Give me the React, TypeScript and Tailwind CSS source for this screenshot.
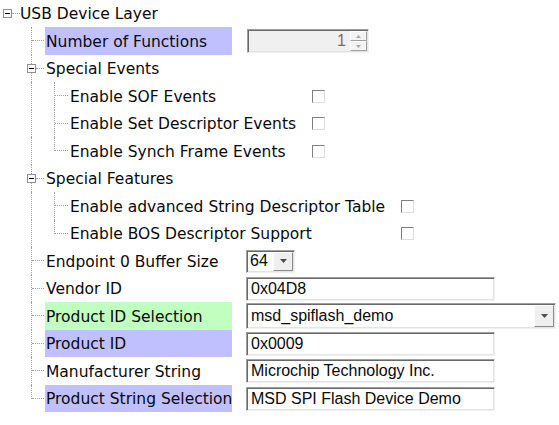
import React from 'react';

type Line = 'tee' | 'ell' | 'pipe' | 'box';

const sunken =
  'border border-t-[#a0a0a0] border-l-[#a0a0a0] border-r-[#f0f0f0] border-b-[#f0f0f0] shadow-[inset_1px_1px_0_#696969,inset_-1px_-1px_0_#e3e3e3]';

function Expander({ className }: { className: string }) {
  return (
    <span className={`absolute w-[9px] h-[9px] border border-[#8f8f8f] bg-white ${className}`}>
      <span className="absolute left-[1px] right-[1px] top-[3px] h-px bg-black" />
    </span>
  );
}

function G0({ kind }: { kind: Line }) {
  return (
    <div className="relative w-[25px] h-full shrink-0">
      {kind === 'ell' ? (
        <span className="absolute left-[11px] top-0 h-[14px] border-l border-dotted border-[#a0a0a0]" />
      ) : (
        <span className="absolute left-[11px] top-0 bottom-0 border-l border-dotted border-[#a0a0a0]" />
      )}
      {kind === 'box' && <Expander className="left-[7px] top-[9px]" />}
      {kind === 'box' && (
        <span className="absolute left-[16px] right-[1px] top-[13px] border-t border-dotted border-[#a0a0a0]" />
      )}
      {(kind === 'tee' || kind === 'ell') && (
        <span className="absolute left-[12px] right-[1px] top-[13px] border-t border-dotted border-[#a0a0a0]" />
      )}
    </div>
  );
}

function G1({ kind }: { kind: Line }) {
  return (
    <div className="relative w-[24px] h-full shrink-0">
      {kind === 'ell' ? (
        <span className="absolute left-[9px] top-0 h-[14px] border-l border-dotted border-[#a0a0a0]" />
      ) : (
        <span className="absolute left-[9px] top-0 bottom-0 border-l border-dotted border-[#a0a0a0]" />
      )}
      <span className="absolute left-[10px] right-[1px] top-[13px] border-t border-dotted border-[#a0a0a0]" />
    </div>
  );
}

function Row({ tall, children }: { tall?: boolean; children: React.ReactNode }) {
  return (
    <div className={`flex items-center pl-[20px] ${tall ? 'h-[28px]' : 'h-[27px]'}`}>{children}</div>
  );
}

function Label({ hl, children }: { hl?: 'purple' | 'green'; children: React.ReactNode }) {
  const bg = hl === 'purple' ? 'bg-[#c0c0ff]' : hl === 'green' ? 'bg-[#c0ffc0]' : '';
  return (
    <div className={`w-[187px] h-full shrink-0 flex items-center pl-[1px] pt-[3px] whitespace-nowrap ${bg}`}>
      {children}
    </div>
  );
}

function Check() {
  return (
    <span className="block w-[13px] h-[13px] bg-white border border-t-[#808080] border-l-[#808080] border-r-[#dedede] border-b-[#dedede]" />
  );
}

function Arrow() {
  return (
    <svg width="7" height="4" viewBox="0 0 7 4">
      <path d="M0 0h7L3.5 4z" fill="#4d4d4d" />
    </svg>
  );
}

function TextBox({ value }: { value: string }) {
  return (
    <div
      className={`ml-[14px] w-[249px] h-[24px] bg-white flex items-center pl-[4px] text-[16px] font-['Liberation_Sans',Arial,sans-serif] ${sunken}`}
    >
      {value}
    </div>
  );
}

function DropButton() {
  return (
    <div className="w-[20px] h-full bg-[#efefef] border border-t-[#fcfcfc] border-l-[#fcfcfc] border-r-[#8c8c8c] border-b-[#8c8c8c] flex items-center justify-center">
      <Arrow />
    </div>
  );
}

export default function App() {
  return (
    <div className="w-[559px] h-[425px] bg-white text-[#0a0a0a] text-[15.5px] font-['DejaVu_Sans',Verdana,sans-serif] overflow-hidden">
      {/* root */}
      <div className="relative flex items-center h-[27px] pl-[20px]">
        <Expander className="left-[3px] top-[9px]" />
        <span className="absolute left-[12px] w-[8px] top-[13px] border-t border-dotted border-[#a0a0a0]" />
        <span className="pt-[3px]">USB Device Layer</span>
      </div>

      <Row tall>
        <G0 kind="tee" />
        <Label hl="purple">Number of Functions</Label>
        <div className={`ml-[15px] w-[122px] h-[24px] bg-[#f0f0f0] flex items-center justify-end pr-[1px] ${sunken}`}>
          <span className="mr-[4px] text-[16px] text-[#7b6a62] font-['Liberation_Sans',Arial,sans-serif]">1</span>
          <div className="w-[17px] h-[20px] flex flex-col">
            <div className="flex-1 flex items-center justify-center bg-[#f3f3f3] border border-t-[#fdfdfd] border-l-[#fdfdfd] border-r-[#a0a0a0] border-b-[#a0a0a0]">
              <svg width="5" height="3" viewBox="0 0 5 3">
                <path d="M2.5 0L5 3H0z" fill="#a8a8a8" />
              </svg>
            </div>
            <div className="flex-1 flex items-center justify-center bg-[#f3f3f3] border border-t-[#fdfdfd] border-l-[#fdfdfd] border-r-[#a0a0a0] border-b-[#a0a0a0]">
              <svg width="5" height="3" viewBox="0 0 5 3">
                <path d="M0 0h5L2.5 3z" fill="#a8a8a8" />
              </svg>
            </div>
          </div>
        </div>
      </Row>

      <Row>
        <G0 kind="box" />
        <span className="pl-[1px] pt-[3px]">Special Events</span>
      </Row>
      <Row tall>
        <G0 kind="pipe" />
        <G1 kind="tee" />
        <div className="w-[243px] shrink-0 pl-[1px] pt-[3px] whitespace-nowrap">Enable SOF Events</div>
        <Check />
      </Row>
      <Row>
        <G0 kind="pipe" />
        <G1 kind="tee" />
        <div className="w-[243px] shrink-0 pl-[1px] pt-[3px] whitespace-nowrap">Enable Set Descriptor Events</div>
        <Check />
      </Row>
      <Row tall>
        <G0 kind="pipe" />
        <G1 kind="ell" />
        <div className="w-[243px] shrink-0 pl-[1px] pt-[3px] whitespace-nowrap">Enable Synch Frame Events</div>
        <Check />
      </Row>

      <Row>
        <G0 kind="box" />
        <span className="pl-[1px] pt-[3px]">Special Features</span>
      </Row>
      <Row tall>
        <G0 kind="pipe" />
        <G1 kind="tee" />
        <div className="w-[332px] shrink-0 pl-[1px] pt-[3px] whitespace-nowrap">Enable advanced String Descriptor Table</div>
        <Check />
      </Row>
      <Row>
        <G0 kind="pipe" />
        <G1 kind="ell" />
        <div className="w-[332px] shrink-0 pl-[1px] pt-[3px] whitespace-nowrap">Enable BOS Descriptor Support</div>
        <Check />
      </Row>

      <Row tall>
        <G0 kind="tee" />
        <Label>Endpoint 0 Buffer Size</Label>
        <div className={`ml-[14px] w-[49px] h-[23px] bg-white flex items-center justify-between pl-[3px] pr-[1px] py-[1px] text-[16px] font-['Liberation_Sans',Arial,sans-serif] ${sunken}`}>
          <span>64</span>
          <DropButton />
        </div>
      </Row>
      <Row>
        <G0 kind="tee" />
        <Label>Vendor ID</Label>
        <TextBox value="0x04D8" />
      </Row>
      <Row tall>
        <G0 kind="tee" />
        <Label hl="green">Product ID Selection</Label>
        <div className={`ml-[14px] w-[310px] h-[26px] bg-white flex items-center justify-between pl-[4px] pr-[1px] py-[1px] text-[16px] font-['Liberation_Sans',Arial,sans-serif] ${sunken}`}>
          <span>msd_spiflash_demo</span>
          <DropButton />
        </div>
      </Row>
      <Row>
        <G0 kind="tee" />
        <Label hl="purple">Product ID</Label>
        <TextBox value="0x0009" />
      </Row>
      <Row tall>
        <G0 kind="tee" />
        <Label>Manufacturer String</Label>
        <TextBox value="Microchip Technology Inc." />
      </Row>
      <Row>
        <G0 kind="ell" />
        <Label hl="purple">Product String Selection</Label>
        <TextBox value="MSD SPI Flash Device Demo" />
      </Row>
    </div>
  );
}
